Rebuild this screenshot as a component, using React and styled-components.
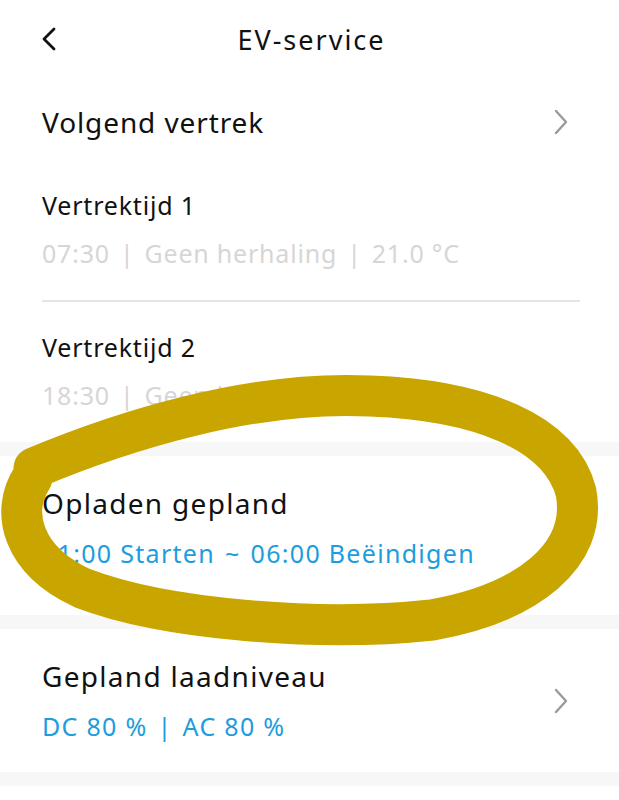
import React from "react";
import styled, { createGlobalStyle } from "styled-components";

const GlobalStyle = createGlobalStyle`
  html, body {
    margin: 0;
    padding: 0;
    background: #ffffff;
  }
  body {
    font-family: "Noto Sans", "Liberation Sans", sans-serif;
    color: #111;
  }
`;

const Screen = styled.div`
  position: relative;
  width: 619px;
  height: 800px;
  overflow: hidden;
  background: #fff;
`;

const Header = styled.div`
  position: relative;
  height: 78px;
  display: flex;
  align-items: center;
  justify-content: center;
`;

const BackButton = styled.div`
  position: absolute;
  left: 40px;
  top: 27px;
  width: 20px;
  height: 26px;
  display: flex;
`;

const Title = styled.h1`
  margin: 0 0 0 4px;
  font-size: 27px;
  font-weight: 400;
  letter-spacing: 2px;
  color: #111;
`;

const Row = styled.div`
  height: ${({ $h }) => $h}px;
  display: flex;
  align-items: center;
  justify-content: space-between;
  padding: 0 50px 0 42px;
`;

const RowLabel = styled.div`
  font-size: ${({ $size }) => $size || 28}px;
  letter-spacing: ${({ $ls }) => ($ls != null ? $ls : 1.3)}px;
  line-height: 32px;
  color: #111;
  white-space: nowrap;
`;

const Item = styled.div`
  padding: ${({ $top }) => $top}px 42px ${({ $bottom }) => $bottom}px;
  display: flex;
  flex-direction: column;
  gap: ${({ $gap }) => $gap || 16}px;
`;

const Sub = styled.div`
  font-size: 25px;
  line-height: 32px;
  letter-spacing: ${({ $blue }) => ($blue ? 1.3 : 0.8)}px;
  color: ${({ $blue }) => ($blue ? "#1b9de0" : "#d6d6d6")};
  white-space: nowrap;
`;

const Sep = styled.span`
  margin: 0 10px;
`;

const Divider = styled.div`
  height: 2px;
  margin: 0 39px 0 42px;
  background: #e4e4e4;
`;

const Band = styled.div`
  height: 14px;
  background: #f7f7f7;
`;

const Card = styled.div`
  display: flex;
  align-items: center;
  justify-content: space-between;
  padding-right: 50px;
`;

const Overlay = styled.svg`
  position: absolute;
  inset: 0;
  pointer-events: none;
`;

const Chevron = () => (
  <svg width="16" height="26" viewBox="0 0 16 26">
    <path d="M3 2 L13 13 L3 24" fill="none" stroke="#9a9a9a" strokeWidth="2.4" strokeLinecap="round" strokeLinejoin="round" />
  </svg>
);

export default function App() {
  return (
    <>
      <GlobalStyle />
      <Screen>
        <Header>
          <BackButton>
            <svg width="20" height="26" viewBox="0 0 20 26">
              <path d="M14 2 L4 12 L14 22" fill="none" stroke="#111" strokeWidth="2.8" strokeLinecap="round" strokeLinejoin="round" />
            </svg>
          </BackButton>
          <Title>EV-service</Title>
        </Header>

        <Row $h={88}>
          <RowLabel $size={28} $ls={0.9}>Volgend vertrek</RowLabel>
          <Chevron />
        </Row>

        <Item $top={23} $bottom={31}>
          <RowLabel $size={25} $ls={0.8}>Vertrektijd 1</RowLabel>
          <Sub>07:30<Sep>|</Sep>Geen herhaling<Sep>|</Sep>21.0 °C</Sub>
        </Item>
        <Divider />
        <Item $top={29} $bottom={31}>
          <RowLabel $size={25} $ls={0.8}>Vertrektijd 2</RowLabel>
          <Sub>18:30<Sep>|</Sep>Geen herhaling<Sep>|</Sep>21.0 °C</Sub>
        </Item>

        <Band />
        <Card>
          <Item $top={31} $bottom={46} $gap={18}>
            <RowLabel>Opladen gepland</RowLabel>
            <Sub $blue>01:00 Starten<Sep>~</Sep>06:00 Beëindigen</Sub>
          </Item>
          <Chevron />
        </Card>
        <Band />
        <Card>
          <Item $top={31} $bottom={30} $gap={18}>
            <RowLabel>Gepland laadniveau</RowLabel>
            <Sub $blue>DC 80 %<Sep>|</Sep>AC 80 %</Sub>
          </Item>
          <Chevron />
        </Card>
        <Band />

        <Overlay width="619" height="800" viewBox="0 0 619 800">
          <path
            d="M34 468 C 120 432, 250 390, 370 396 C 480 400, 560 432, 576 492 C 588 555, 528 603, 432 620 C 320 632, 165 620, 82 588 C 22 560, 10 512, 32 478"
            fill="none"
            stroke="#c9a500"
            strokeWidth="41"
            strokeLinecap="round"
            strokeLinejoin="round"
          />
        </Overlay>
      </Screen>
    </>
  );
}
